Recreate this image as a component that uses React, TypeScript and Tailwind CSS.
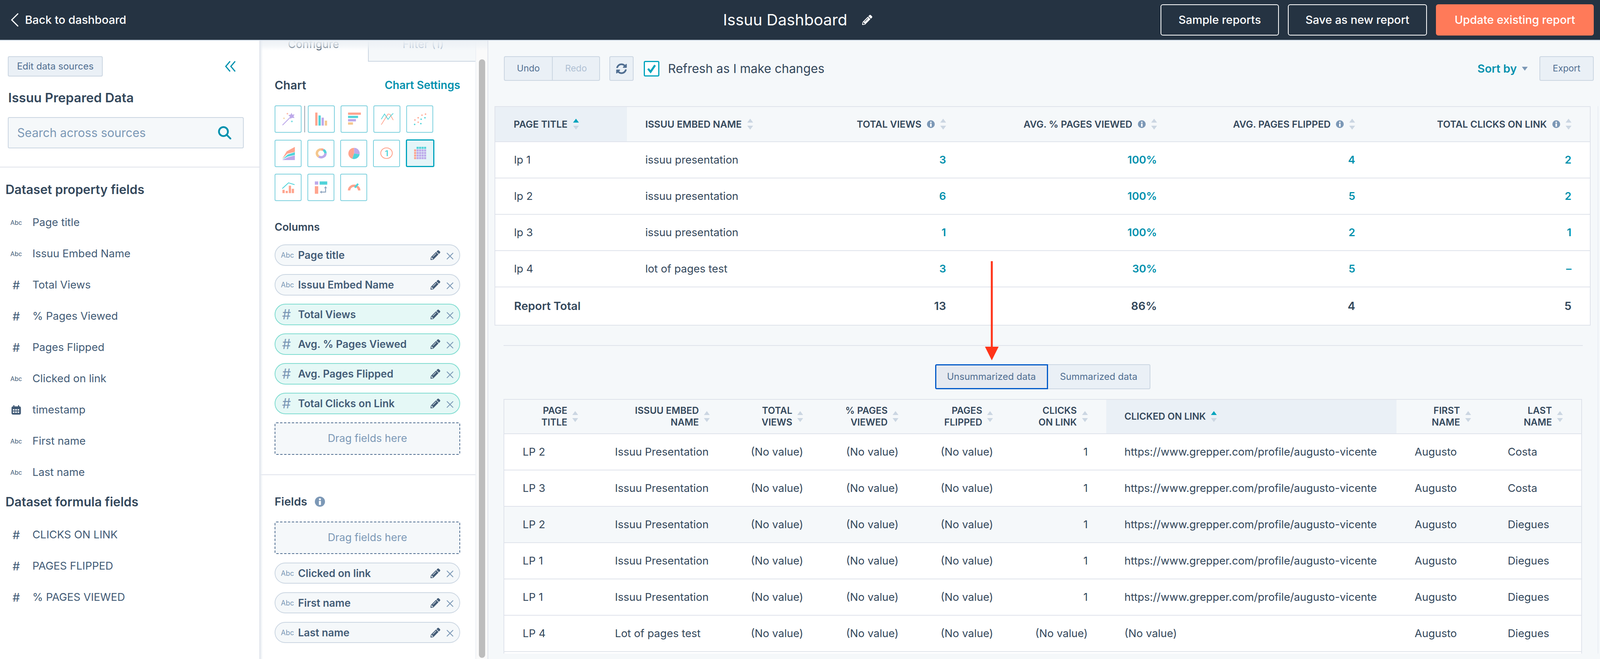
import { FaPencilAlt, FaSyncAlt } from "react-icons/fa";

const coral = "#ffa48e";
const aqua = "#51d3d9";
const purple = "#bda9ea";
const peach = "#f5c78e";

function Hash({ className }: { className: string }) {
  return <span className={`font-normal leading-none ${className}`}>#</span>;
}

function CloseIcon() {
  return (
    <svg width="18" height="18" viewBox="0 0 18 18" className="mt-[4px] shrink-0">
      <path d="M1 1 L17 17 M17 1 L1 17" stroke="#7c98b6" strokeWidth="2.2" />
    </svg>
  );
}

function InfoIcon({ size = 20 }: { size?: number }) {
  return (
    <svg width={size} height={size} viewBox="0 0 20 20" className="shrink-0">
      <circle cx="10" cy="10" r="10" fill="#7c98b6" />
      <rect x="8" y="8.5" width="4" height="8" fill="#fff" />
      <circle cx="10" cy="5.2" r="2" fill="#fff" />
    </svg>
  );
}

function SortIcon({ active = false }: { active?: boolean }) {
  return (
    <svg width="15" height="28" viewBox="0 0 15 28" className="shrink-0">
      <path d="M7.5 0 L15 10 L0 10 Z" fill={active ? "#00a4bd" : "#cbd6e2"} />
      <path d="M0 18 L15 18 L7.5 28 Z" fill="#cbd6e2" />
    </svg>
  );
}

function CalendarIcon() {
  return (
    <svg width="25" height="25" viewBox="0 0 25 25">
      <rect x="0.5" y="3" width="24" height="21" rx="4" fill="#425b76" />
      <rect x="5" y="0" width="3" height="5" fill="#425b76" />
      <rect x="17" y="0" width="3" height="5" fill="#425b76" />
      <rect x="4" y="10" width="4" height="3.5" fill="#fff" />
      <rect x="10" y="10" width="4" height="3.5" fill="#fff" />
      <rect x="16" y="10" width="4" height="3.5" fill="#fff" />
      <rect x="4" y="16" width="4" height="3.5" fill="#fff" />
      <rect x="10" y="16" width="4" height="3.5" fill="#fff" />
      <rect x="16" y="16" width="4" height="3.5" fill="#fff" />
    </svg>
  );
}

function Sparkle({ x, y, r, fill }: { x: number; y: number; r: number; fill: string }) {
  return (
    <path
      d={`M${x} ${y - r} L${x + r / 4} ${y - r / 4} L${x + r} ${y} L${x + r / 4} ${y + r / 4} L${x} ${y + r} L${x - r / 4} ${y + r / 4} L${x - r} ${y} L${x - r / 4} ${y - r / 4} Z`}
      fill={fill}
    />
  );
}

// viewBox of each drawing is in the same units so the shapes can be read off the reference
const chartIcons = [
  {
    box: "102 755 180 198",
    art: (
      <>
        <path d="M154 899 L206 842" stroke={purple} strokeWidth="6" strokeLinecap="round" />
        <path d="M217 805 L221 820 L238 818 L230 832 L238 846 L220 844 L208 852 L205 835 L194 824 L209 820 Z" fill={purple} />
        <Sparkle x={187} y={813} r={9} fill={coral} />
        <Sparkle x={163} y={848} r={9} fill={peach} />
        <Sparkle x={219} y={872} r={10} fill={aqua} />
      </>
    ),
  },
  {
    box: "325 755 180 198",
    art: (
      <>
        <rect x="372" y="804" width="16" height="100" fill={coral} />
        <rect x="395" y="826" width="16" height="78" fill={aqua} />
        <rect x="417" y="843" width="16" height="61" fill={purple} />
        <rect x="440" y="866" width="16" height="38" fill={peach} />
      </>
    ),
  },
  {
    box: "542 755 180 198",
    art: (
      <>
        <rect x="589" y="804" width="91" height="17" fill={coral} />
        <rect x="589" y="829" width="71" height="17" fill={aqua} />
        <rect x="589" y="854" width="56" height="18" fill={purple} />
        <rect x="589" y="879" width="35" height="18" fill={peach} />
      </>
    ),
  },
  {
    box: "760 755 180 198",
    art: (
      <>
        <path d="M810 897 L858 815 L872 818 L895 862" fill="none" stroke={coral} strokeWidth="5" />
        <path d="M810 855 L833 815 L858 856 L878 828 L895 810" fill="none" stroke={aqua} strokeWidth="5" />
      </>
    ),
  },
  {
    box: "977 755 180 198",
    art: (
      <>
        {[[1108, 816], [1083, 824], [1056, 844], [1033, 861], [1056, 878]].map(([cx, cy]) => (
          <circle key={cx + "-" + cy} cx={cx} cy={cy} r="5.5" fill={coral} />
        ))}
        {[[1104, 844], [1077, 855], [1031, 895], [1075, 889]].map(([cx, cy]) => (
          <circle key={cx + "-" + cy} cx={cx} cy={cy} r="5.5" fill={aqua} />
        ))}
      </>
    ),
  },
  {
    box: "102 1001 180 198",
    art: (
      <>
        <path d="M150 1142 L182 1084 L240 1050 L240 1088 L186 1102 Z" fill={coral} />
        <path d="M152 1146 L190 1108 L240 1090 L240 1112 L190 1124 Z" fill={aqua} />
        <path d="M150 1151 L190 1130 L240 1115 L240 1151 Z" fill={purple} />
      </>
    ),
  },
  {
    box: "320 1001 180 198",
    art: (
      <>
        <path d="M412 1069 A30 30 0 0 1 427 1073" fill="none" stroke={coral} strokeWidth="18" />
        <path d="M427 1073 A30 30 0 0 1 442 1099" fill="none" stroke={aqua} strokeWidth="18" />
        <path d="M442 1099 A30 30 0 0 1 395 1124" fill="none" stroke={purple} strokeWidth="18" />
        <path d="M395 1124 A30 30 0 0 1 412 1069" fill="none" stroke={peach} strokeWidth="18" />
      </>
    ),
  },
  {
    box: "537 1001 180 198",
    art: (
      <>
        <path d="M630 1100 L630 1057 A40 43 0 0 0 617 1141 Z" fill={coral} />
        <path d="M630 1100 L630 1057 A40 43 0 0 1 669 1107 Z" fill={purple} />
        <path d="M630 1100 L669 1107 A40 43 0 0 1 617 1141 Z" fill={aqua} />
      </>
    ),
  },
  {
    box: "755 1001 180 198",
    art: (
      <>
        <circle cx="845" cy="1098" r="41" fill="none" stroke={coral} strokeWidth="6" />
        <text x="845" y="1121" textAnchor="middle" fontSize="60" fontWeight="600" fill={aqua} fontFamily="Inter, sans-serif">
          1
        </text>
      </>
    ),
  },
  {
    box: "968 1001 189 198",
    selected: true,
    art: (
      <>
        {[1050, 1070, 1090, 1110, 1130].map((y, r) =>
          [1019, 1037, 1055, 1073, 1091].map((x, c) =>
            r === 0 && c === 0 ? null : (
              <rect key={x + "-" + y} x={x} y={y} width="15" height="16" fill={r === 0 ? aqua : c === 0 ? coral : purple} />
            ),
          ),
        )}
      </>
    ),
  },
  {
    box: "102 1247 180 198",
    art: (
      <>
        <rect x="152" y="1365" width="16" height="25" fill={coral} />
        <rect x="175" y="1373" width="15" height="17" fill={coral} />
        <rect x="197" y="1333" width="16" height="57" fill={coral} />
        <rect x="218" y="1357" width="16" height="33" fill={coral} />
        <path d="M151 1355 L195 1311 L238 1325" fill="none" stroke={aqua} strokeWidth="6" />
      </>
    ),
  },
  {
    box: "320 1247 180 198",
    art: (
      <>
        <rect x="367" y="1300" width="24" height="25" fill={purple} />
        <rect x="401" y="1300" width="54" height="25" fill={aqua} />
        <rect x="367" y="1337" width="24" height="58" fill={coral} />
        <path d="M412 1382 L443 1382 L443 1350" fill="none" stroke="#8fa6c0" strokeWidth="7" />
        <path d="M443 1337 L454 1352 L432 1352 Z M402 1382 L416 1371 L416 1393 Z" fill="#8fa6c0" />
      </>
    ),
  },
  {
    box: "537 1247 180 198",
    art: (
      <>
        <path d="M594 1369 A36 36 0 0 1 666 1369" fill="none" stroke={coral} strokeWidth="17" />
        <path d="M635 1348 L658 1318" stroke={aqua} strokeWidth="13" />
      </>
    ),
  },
];

function ChartButton({ icon }: { icon: (typeof chartIcons)[number] }) {
  return (
    <div
      className={
        icon.selected
          ? "h-[71px] w-[73px] rounded-[4px] border-[3px] border-[#00a4bd] bg-[#e5f5f8]"
          : "h-[70px] w-[69px] rounded-[4px] border-2 border-[#7fd1de] bg-white"
      }
    >
      <svg viewBox={icon.box} preserveAspectRatio="none" className="h-full w-full">
        {icon.art}
      </svg>
    </div>
  );
}

type PillKind = "text" | "number";

function Pill({ label, kind = "text", h = "h-[55px]" }: { label: string; kind?: PillKind; h?: string }) {
  const tone = kind === "number" ? "border-[#7fdcd0] bg-[#e5f8f6]" : "border-[#cbd6e2] bg-[#f5f8fa]";
  return (
    <div className={`flex w-full items-center rounded-full border-2 pr-[15px] ${tone} ${h}`}>
      <span className={`w-[58px] shrink-0 ${kind === "number" ? "pl-[17px]" : "pl-[14px]"}`}>
        {kind === "number" ? (
          <Hash className="text-[36px] text-[#7c98b6]" />
        ) : (
          <span className="text-[18px] text-[#7c98b6]">Abc</span>
        )}
      </span>
      <span className="flex-1 text-[26.5px] leading-none font-semibold text-[#425b76]">{label}</span>
      <FaPencilAlt className="mr-[16px] h-[25px] w-[25px] text-[#425b76]" />
      <CloseIcon />
    </div>
  );
}

function DropZone() {
  return (
    <div className="flex h-[83px] w-full items-center justify-center rounded-[4px] border-2 border-dashed border-[#506e91] bg-[#f5f8fa] text-[27px] text-[#7c98b6]">
      Drag fields here
    </div>
  );
}

function FieldRow({ label, icon }: { label: string; icon: "abc" | "hash" | "date" }) {
  return (
    <div className="flex h-[80px] items-center">
      <span className="flex w-[83px] justify-center">
        <span className="flex w-[28px] justify-center">
          {icon === "abc" && <span className="text-[16px] leading-none text-[#425b76]">Abc</span>}
          {icon === "hash" && <Hash className="text-[30px] text-[#425b76]" />}
          {icon === "date" && <CalendarIcon />}
        </span>
      </span>
      <span className="text-[27.5px] text-[#425b76]">{label}</span>
    </div>
  );
}

const topCols = "grid grid-cols-[345fr_417fr_468fr_553fr_520fr_567fr]";
const bottomCols = "grid grid-cols-[242fr_345fr_245fr_250fr_248fr_248fr_761fr_244fr_241fr]";

const topRows = [
  ["lp 1", "issuu presentation", "3", "100%", "4", "2"],
  ["lp 2", "issuu presentation", "6", "100%", "5", "2"],
  ["lp 3", "issuu presentation", "1", "100%", "2", "1"],
  ["lp 4", "lot of pages test", "3", "30%", "5", "–"],
];

function TopHead({ label, align = "right", active = false }: { label: string; align?: "left" | "right"; active?: boolean }) {
  return (
    <div
      className={`flex min-w-0 items-center gap-[14px] px-[47px] whitespace-nowrap ${align === "right" ? "justify-end" : ""} ${active ? "bg-[#eaf0f6]" : ""}`}
    >
      <span className="text-[24.5px] font-semibold text-[#33475b]">{label}</span>
      {align === "right" && <InfoIcon />}
      <SortIcon active={active} />
    </div>
  );
}

const bottomRows = [
  ["LP 2", "Issuu Presentation", "(No value)", "(No value)", "(No value)", "1", "https://www.grepper.com/profile/augusto-vicente", "Augusto", "Costa"],
  ["LP 3", "Issuu Presentation", "(No value)", "(No value)", "(No value)", "1", "https://www.grepper.com/profile/augusto-vicente", "Augusto", "Costa"],
  ["LP 2", "Issuu Presentation", "(No value)", "(No value)", "(No value)", "1", "https://www.grepper.com/profile/augusto-vicente", "Augusto", "Diegues"],
  ["LP 1", "Issuu Presentation", "(No value)", "(No value)", "(No value)", "1", "https://www.grepper.com/profile/augusto-vicente", "Augusto", "Diegues"],
  ["LP 1", "Issuu Presentation", "(No value)", "(No value)", "(No value)", "1", "https://www.grepper.com/profile/augusto-vicente", "Augusto", "Diegues"],
  ["LP 4", "Lot of pages test", "(No value)", "(No value)", "(No value)", "(No value)", "(No value)", "Augusto", "Diegues"],
];

function BottomHead({ lines, left = false, active = false }: { lines: string[]; left?: boolean; active?: boolean }) {
  return (
    <div className={`flex min-w-0 items-center gap-[13px] px-[47px] whitespace-nowrap ${left ? "" : "justify-end"} ${active ? "bg-[#eaf0f6]" : ""}`}>
      <span className="text-right text-[24px] leading-[30px] font-semibold text-[#33475b]">
        {lines.map((l) => (
          <span key={l} className="block">
            {l}
          </span>
        ))}
      </span>
      <SortIcon active={active} />
    </div>
  );
}

export default function App() {
  return (
    <div className="flex h-screen w-full flex-col overflow-hidden bg-white font-['Inter',sans-serif]">
      {/* Top bar */}
      <header className="relative z-10 grid h-[104px] shrink-0 grid-cols-[1fr_auto_1fr] items-center border-b-2 border-[#cbd6e2] bg-[#253342] pr-[16px] pl-[28px] text-white">
        <div className="flex items-center gap-[17px]">
          <svg width="19" height="34" viewBox="0 0 19 34">
            <path d="M17.5 1.5 L2 17 L17.5 32.5" fill="none" stroke="#fff" strokeWidth="3" strokeLinecap="round" />
          </svg>
          <span className="text-[29px] font-medium">Back to dashboard</span>
        </div>
        <div className="mr-[24px] flex items-center gap-[38px]">
          <span className="text-[40px]">Issuu Dashboard</span>
          <FaPencilAlt className="h-[26px] w-[26px]" />
        </div>
        <div className="flex items-center justify-end gap-[23px] text-[29px] font-medium">
          <div className="flex h-[80px] w-[303px] items-center justify-center rounded-[6px] border-2 border-white">Sample reports</div>
          <div className="flex h-[80px] w-[356px] items-center justify-center rounded-[6px] border-2 border-white">Save as new report</div>
          <div className="flex h-[80px] w-[404px] items-center justify-center rounded-[6px] bg-[#ff7a59]">Update existing report</div>
        </div>
      </header>

      <div className="flex min-h-0 flex-1">
        {/* Data sources */}
        <aside className="w-[16.26%] shrink-0 border-r-2 border-[#dfe3eb] pt-[40px]">
          <div className="flex items-center justify-between pr-[60px] pl-[20px]">
            <div className="flex h-[52px] w-[243px] items-center justify-center rounded-[4px] border-2 border-[#cbd6e2] bg-[#eaf0f6] text-[24px] text-[#506e91]">
              Edit data sources
            </div>
            <svg width="28" height="28" viewBox="0 0 28 28">
              <path d="M13 1 L2 14 L13 27 M26 1 L15 14 L26 27" fill="none" stroke="#0091ae" strokeWidth="3" />
            </svg>
          </div>
          <h2 className="mt-[32px] pl-[21px] text-[33px] leading-[44px] font-semibold text-[#33475b]">Issuu Prepared Data</h2>
          <div className="mt-[28px] mr-[40px] ml-[20px] flex h-[80px] items-center justify-between rounded-[4px] border-2 border-[#cbd6e2] bg-[#f5f8fa] pr-[30px] pl-[22px]">
            <span className="text-[30.5px] text-[#7c98b6]">Search across sources</span>
            <svg width="34" height="34" viewBox="0 0 34 34">
              <circle cx="14" cy="14" r="11.5" fill="none" stroke="#0091ae" strokeWidth="4.5" />
              <path d="M22 22 L32 32" stroke="#0091ae" strokeWidth="4.5" strokeLinecap="round" />
            </svg>
          </div>
          <div className="mt-[47px] h-[2px] bg-[#dfe3eb]" />
          <h3 className="mt-[37px] pl-[14px] text-[32px] leading-[40px] font-semibold text-[#33475b]">Dataset property fields</h3>
          <div className="mt-[24px]">
            <FieldRow icon="abc" label="Page title" />
            <FieldRow icon="abc" label="Issuu Embed Name" />
            <FieldRow icon="hash" label="Total Views" />
            <FieldRow icon="hash" label="% Pages Viewed" />
            <FieldRow icon="hash" label="Pages Flipped" />
            <FieldRow icon="abc" label="Clicked on link" />
            <FieldRow icon="date" label="timestamp" />
            <FieldRow icon="abc" label="First name" />
            <FieldRow icon="abc" label="Last name" />
          </div>
          <h3 className="mt-[16px] pl-[14px] text-[32px] leading-[40px] font-semibold text-[#33475b]">Dataset formula fields</h3>
          <div className="mt-[24px]">
            <FieldRow icon="hash" label="CLICKS ON LINK" />
            <FieldRow icon="hash" label="PAGES FLIPPED" />
            <FieldRow icon="hash" label="% PAGES VIEWED" />
          </div>
        </aside>

        {/* Configure panel */}
        <section className="relative flex w-[14.26%] shrink-0 border-r-2 border-[#dfe3eb]">
          <div className="pointer-events-none absolute inset-x-0 top-0 z-[5] h-[26px] bg-linear-to-b from-[#eef2f6] via-[#eef2f6]/70 to-transparent" />
          <div className="pointer-events-none absolute inset-y-0 left-0 z-[5] w-[7px] bg-linear-to-r from-[#e6ebf1] to-transparent" />
          <div className="min-w-0 flex-1 border-r-2 border-[#eef1f5]">
            <div className="flex h-[54px]">
              <div className="w-[50%] pl-[71px]">
                <span className="-mt-[12px] block text-[28px] text-[#33475b]">Configure</span>
              </div>
              <div className="flex-1 border-b-2 border-l-2 border-[#cbd6e2] bg-[#f5f8fa] pl-[87px]">
                <span className="-mt-[12px] block text-[28px] text-[#99acc2]">Filter (1)</span>
              </div>
            </div>
            <div className="pr-[39px] pl-[37px]">
              <div className="mt-[40px] flex h-[40px] items-center justify-between">
                <span className="text-[30px] font-semibold text-[#33475b]">Chart</span>
                <span className="text-[28px] font-semibold text-[#0091ae]">Chart Settings</span>
              </div>
              <div className="mt-[32px] flex items-center">
                <ChartButton icon={chartIcons[0]} />
                <div className="mx-[7px] h-[68px] w-[2px] bg-[#99a5b1]" />
                <div className="flex gap-[15px]">
                  {chartIcons.slice(1, 5).map((c) => (
                    <ChartButton key={c.box} icon={c} />
                  ))}
                </div>
              </div>
              <div className="mt-[17px] flex items-center gap-[15px]">
                {chartIcons.slice(5, 10).map((c) => (
                  <ChartButton key={c.box} icon={c} />
                ))}
              </div>
              <div className="mt-[17px] flex gap-[15px]">
                {chartIcons.slice(10).map((c) => (
                  <ChartButton key={c.box} icon={c} />
                ))}
              </div>
              <h3 className="mt-[47px] text-[27px] leading-[40px] font-semibold text-[#33475b]">Columns</h3>
              <div className="mt-[24px] flex flex-col gap-[21px]">
                <Pill label="Page title" />
                <Pill label="Issuu Embed Name" />
                <Pill label="Total Views" kind="number" />
                <Pill label="Avg. % Pages Viewed" kind="number" />
                <Pill label="Avg. Pages Flipped" kind="number" />
                <Pill label="Total Clicks on Link" kind="number" />
                <DropZone />
              </div>
            </div>
            <div className="mt-[50px] h-[2px] bg-[#dfe3eb]" />
            <div className="pr-[39px] pl-[37px]">
              <div className="mt-[48px] flex h-[40px] items-center gap-[20px]">
                <h3 className="text-[29px] font-semibold text-[#33475b]">Fields</h3>
                <InfoIcon size={26} />
              </div>
              <div className="mt-[31px] flex flex-col gap-[22px]">
                <DropZone />
                <Pill label="Clicked on link" h="h-[54px]" />
                <Pill label="First name" h="h-[54px]" />
                <Pill label="Last name" h="h-[54px]" />
              </div>
            </div>
          </div>
          <div className="w-[29px] shrink-0 bg-[#fafafa] pt-[48px] pb-[3px]">
            <div className="mx-auto h-full w-[16px] rounded-full bg-[#bdbdbd]" />
          </div>
        </section>

        {/* Report preview */}
        <main className="relative min-w-0 flex-1 bg-[#f5f8fa]">
          <div className="h-[1570px] overflow-hidden pt-[40px]">
            <div className="flex h-[63px] items-center pr-[16px] pl-[40px]">
              <div className="flex h-[63px] w-[246px] rounded-[4px] border-2 border-[#cbd6e2] bg-[#eaf0f6] text-[23px]">
                <span className="flex w-[123px] items-center justify-center border-r-2 border-[#cbd6e2] text-[#506e91]">Undo</span>
                <span className="flex flex-1 items-center justify-center text-[#b0c1d4]">Redo</span>
              </div>
              <div className="ml-[24px] flex h-[63px] w-[62px] items-center justify-center rounded-[4px] border-2 border-[#cbd6e2] bg-[#eaf0f6]">
                <FaSyncAlt className="h-[28px] w-[28px] text-[#506e91]" />
              </div>
              <div className="ml-[26px] flex h-[40px] w-[40px] items-center justify-center rounded-[4px] border-[3px] border-[#00a4bd] bg-white">
                <svg width="24" height="24" viewBox="0 0 24 24">
                  <path d="M3 12 L9.5 20 L21 3" fill="none" stroke="#00a4bd" strokeWidth="5" />
                </svg>
              </div>
              <span className="ml-[22px] text-[31.5px] text-[#33475b]">Refresh as I make changes</span>
              <span className="ml-auto text-[29px] font-semibold text-[#0091ae]">Sort by</span>
              <svg width="15" height="10" viewBox="0 0 15 10" className="mr-[30px] ml-[13px]">
                <path d="M0 0 L15 0 L7.5 10 Z" fill="#7c98b6" />
              </svg>
              <div className="flex h-[63px] w-[139px] items-center justify-center rounded-[4px] border-2 border-[#cbd6e2] bg-[#eaf0f6] text-[23px] text-[#506e91]">
                Export
              </div>
            </div>

            <div className="mt-[65px] mr-[4px] border-r-2 border-[#e9edf3] pr-[18px] pl-[16px]">
              {/* Summary table */}
              <div className="border-x-2 border-t-2 border-[#dfe3eb] bg-white">
                <div className={`${topCols} h-[90px] border-b-2 border-[#dfe3eb] bg-[#f5f8fa]`}>
                  <TopHead label="PAGE TITLE" align="left" active />
                  <TopHead label="ISSUU EMBED NAME" align="left" />
                  <TopHead label="TOTAL VIEWS" />
                  <TopHead label="AVG. % PAGES VIEWED" />
                  <TopHead label="AVG. PAGES FLIPPED" />
                  <TopHead label="TOTAL CLICKS ON LINK" />
                </div>
                {topRows.map((row) => (
                  <div key={row[0]} className={`${topCols} h-[93px] items-center border-b-2 border-[#dfe3eb] text-[27.5px]`}>
                    <span className="pl-[48px] text-[#33475b]">{row[0]}</span>
                    <span className="pl-[47px] text-[#33475b]">{row[1]}</span>
                    {row.slice(2).map((v, i) => (
                      <span key={i} className="pr-[47px] text-right font-semibold text-[#0091ae]">
                        {v}
                      </span>
                    ))}
                  </div>
                ))}
                <div className={`${topCols} h-[98px] items-center border-b-2 border-[#dfe3eb] text-[29px] font-semibold text-[#33475b]`}>
                  <span className="pl-[48px]">Report Total</span>
                  <span />
                  <span className="pr-[47px] text-right">13</span>
                  <span className="pr-[47px] text-right">86%</span>
                  <span className="pr-[47px] text-right">4</span>
                  <span className="pr-[47px] text-right">5</span>
                </div>
              </div>

              <div className="mt-[50px] mr-[20px] ml-[23px] h-[2px] bg-[#dfe3eb]" />

              <div className="mt-[47px] flex justify-center">
                <div className="flex h-[64px]">
                  <div className="flex w-[289px] items-center justify-center rounded-l-[4px] border-[3px] border-[#0059c8] bg-[#e5e9f0] text-[24px] text-[#506e91]">
                    Unsummarized data
                  </div>
                  <div className="flex w-[262px] items-center justify-center rounded-r-[4px] border-y-2 border-r-2 border-[#cbd6e2] bg-[#eaf0f6] text-[24px] text-[#506e91]">
                    Summarized data
                  </div>
                </div>
              </div>

              {/* Detail table */}
              <div className="mt-[25px] mr-[22px] ml-[23px] border-x-2 border-t-2 border-[#dfe3eb] bg-white">
                <div className={`${bottomCols} h-[88px] border-b-2 border-[#dfe3eb] bg-[#f5f8fa]`}>
                  <BottomHead lines={["PAGE", "TITLE"]} />
                  <BottomHead lines={["ISSUU EMBED", "NAME"]} />
                  <BottomHead lines={["TOTAL", "VIEWS"]} />
                  <BottomHead lines={["% PAGES", "VIEWED"]} />
                  <BottomHead lines={["PAGES", "FLIPPED"]} />
                  <BottomHead lines={["CLICKS", "ON LINK"]} />
                  <BottomHead lines={["CLICKED ON LINK"]} left active />
                  <BottomHead lines={["FIRST", "NAME"]} />
                  <BottomHead lines={["LAST", "NAME"]} />
                </div>
                {bottomRows.map((row, r) => (
                  <div
                    key={r}
                    className={`${bottomCols} h-[93px] items-center border-b-2 border-[#dfe3eb] text-[27.5px] text-[#33475b] ${r === 2 ? "bg-[#f5f8fa]" : ""}`}
                  >
                    {row.map((v, i) => (
                      <span key={i} className={`min-w-0 px-[47px] whitespace-nowrap ${i >= 2 && i <= 5 ? "text-right" : ""}`}>
                        {v}
                      </span>
                    ))}
                  </div>
                ))}
                <div className="h-[93px]" />
              </div>
            </div>
          </div>

          {/* Annotation arrow */}
          <svg width="40" height="256" viewBox="0 0 40 256" className="absolute top-[565px] left-[45.3%] z-10 -ml-[20px]">
            <path d="M20 0 L20 222" stroke="#ff3419" strokeWidth="5" />
            <path d="M2.5 219 L37.5 219 L20 254 Z" fill="#ff3419" />
          </svg>
        </main>
      </div>
    </div>
  );
}
